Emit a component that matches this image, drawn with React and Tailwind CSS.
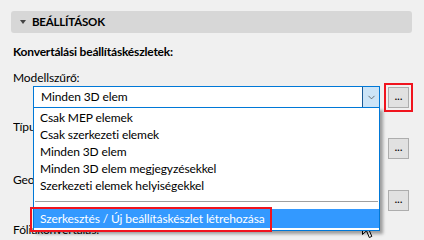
import { ChevronDown } from 'lucide-react';

const items = [
  'Csak MEP elemek',
  'Csak szerkezeti elemek',
  'Minden 3D elem',
  'Minden 3D elem megjegyzésekkel',
  'Szerkezeti elemek helyiségekkel',
];

function DotsButton({ marked }) {
  return (
    <div className="relative ml-[8px] w-[21px] h-[21px] shrink-0 bg-[#e1e1e1] border border-[#adadad] flex items-center justify-center leading-none">
      <span className="text-[12px] -mt-[3px]">...</span>
      {marked && <div className="absolute -left-[5px] -top-[5px] w-[29px] h-[29px] border-2 border-[#f0141e]" />}
    </div>
  );
}

function Cursor() {
  return (
    <svg className="absolute left-[362px] top-[218px]" width="14" height="21" viewBox="0 0 14 21">
      <path d="M0.5 0.5 L0.5 16.5 L4.5 12.8 L7.3 19.5 L9.8 18.4 L7 11.8 L12 11.8 Z"
        fill="#fff" stroke="#000" strokeWidth="1" strokeLinejoin="round" />
    </svg>
  );
}

export default function App() {
  return (
    <div className="relative w-[424px] h-[240px] overflow-hidden bg-[#f0f0f0] text-black text-[12px] tracking-[-0.1px] font-['Lato',sans-serif] pt-[11px] pl-[11px] pr-[12px]">
      <div className="h-[22px] rounded-[3px] bg-[#d7d7d7] flex items-center pl-[9px] gap-[6px]">
        <svg width="6" height="4" viewBox="0 0 6 4"><path d="M0 0 L6 0 L3 4 Z" fill="#444" /></svg>
        <span className="font-bold text-[11.5px] tracking-[-0.2px]">BEÁLLÍTÁSOK</span>
      </div>

      <div className="pl-[2px]">
        <div className="mt-[11px] leading-[16px] font-bold tracking-[-0.2px]">Konvertálási beállításkészletek:</div>
        <div className="mt-[10px] leading-[16px]">Modellszűrő:</div>

        <div className="flex items-center">
          <div className="relative ml-[20px] w-[347px] h-[22px] bg-white border border-[#0078d7] flex items-center pl-[7px]">
            Minden 3D elem
            <div className="absolute right-0 top-0 bottom-0 w-[17px] bg-[#cce4f7] border-l border-[#1a5a96] flex items-center justify-center">
              <ChevronDown size={11} strokeWidth={1.6} className="text-[#444]" />
            </div>

            <div className="absolute left-[-1px] top-[20px] w-[347px] h-[124px] bg-white border border-[#0078d7] shadow-[3px_3px_3px_rgba(0,0,0,0.35)] z-10">
              <div className="pt-[1px]">
                {items.map(t => (
                  <div key={t} className="h-[17px] leading-[17px] pl-[6px] whitespace-nowrap">{t}</div>
                ))}
              </div>
              <div className="mx-[1px] mt-[7px] h-px bg-[#a0a0a0]" />
              <div className="mt-[7px] h-[19px] leading-[19px] bg-[#3399ff] text-white pl-[6px] whitespace-nowrap">
                Szerkesztés / Új beállításkészlet létrehozása
              </div>
              <div className="absolute left-[-4px] top-[99px] w-[242px] h-[25px] border-2 border-[#f0141e]" />
            </div>
          </div>
          <DotsButton marked />
        </div>

        <div className="mt-[11px] leading-[16px] w-[20px] overflow-hidden whitespace-nowrap">Típusleképezés:</div>
        <div className="mt-[2px] flex items-center">
          <div className="ml-[20px] w-[347px] h-[22px] bg-white border border-[#7a7a7a]" />
          <DotsButton />
        </div>

        <div className="mt-[13px] leading-[16px] w-[20px] overflow-hidden whitespace-nowrap">Geometria:</div>
        <div className="mt-[1px] flex items-center">
          <div className="ml-[20px] w-[347px] h-[22px] bg-white border border-[#7a7a7a]" />
          <DotsButton />
        </div>

        <div className="mt-[11px] leading-[16px]">Fóliakonvertálás:</div>
      </div>

      <Cursor />
    </div>
  );
}
